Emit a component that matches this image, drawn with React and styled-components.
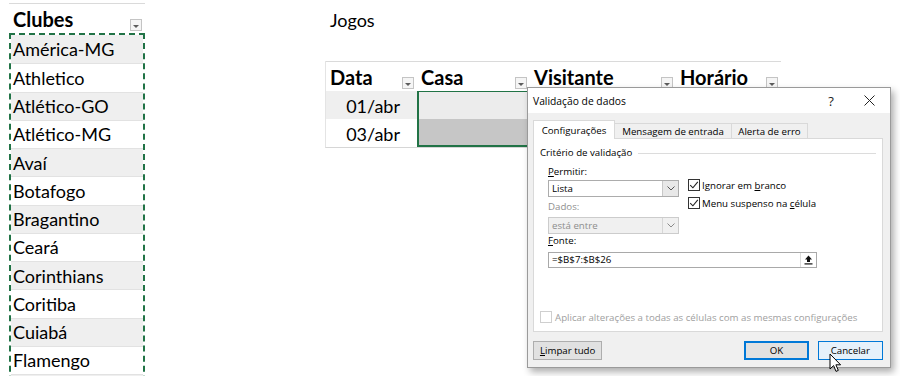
import React from "react";
import styled, { createGlobalStyle } from "styled-components";

const GlobalStyle = createGlobalStyle`
  html, body {
    margin: 0;
    padding: 0;
    background: #ffffff;
  }
  body {
    width: 900px;
    height: 376px;
    overflow: hidden;
    font-family: Lato, "Liberation Sans", sans-serif;
  }
`;

const EXCEL_GREEN = "#217346";

// Sheet
const Page = styled.div`
  position: relative;
  box-sizing: border-box;
  height: 376px;
  overflow: hidden;
  display: flex;
  align-items: flex-start;
  padding: 3px 0 0 9px;
  color: #000;
`;

const ClubList = styled.div`
  width: 136px;
  flex-shrink: 0;
`;

const HeaderCell = styled.div`
  box-sizing: border-box;
  width: ${(p) => p.$w}px;
  height: 30px;
  border-top: 1px solid #dadada;
  display: flex;
  align-items: center;
  justify-content: space-between;
  padding-left: 4px;
  font-size: 20px;
  font-weight: 700;
  background: #fff;
`;

const FilterButton = styled.span`
  box-sizing: border-box;
  align-self: flex-end;
  width: 12px;
  height: 12px;
  margin: 0 3px 2px 0;
  border: 1px solid #c4c4c4;
  background: #f5f5f5;
  display: flex;
  align-items: flex-end;
  justify-content: center;
  padding-bottom: 2px;

  &::after {
    content: "";
    border-left: 3px solid transparent;
    border-right: 3px solid transparent;
    border-top: 3px solid #5c5c5c;
  }
`;

const ClubRows = styled.div`
  border: 2px dashed ${EXCEL_GREEN};
  border-bottom: none;
`;

const ClubRow = styled.div`
  box-sizing: border-box;
  height: 28.25px;
  display: flex;
  align-items: center;
  padding-left: 2px;
  font-size: 18px;
  border-top: ${(p) => (p.$first ? "none" : "1px solid #e2e2e2")};
  background: ${(p) => (p.$shade ? "#efefef" : "#ffffff")};
`;

const GamesArea = styled.div`
  margin-left: 180px;
  display: flex;
  flex-direction: column;
`;

const GamesTitle = styled.div`
  height: 58px;
  line-height: 34px;
  padding-left: 5px;
  font-size: 18px;
`;

const Table = styled.div`
  width: 455px;
  border-left: 1px solid #e4e4e4;
  border-bottom: 1px solid #d6d6d6;
`;

const TableRow = styled.div`
  display: flex;
  height: ${(p) => (p.$head ? 30 : 28)}px;
`;

const DataCell = styled.div`
  box-sizing: border-box;
  width: ${(p) => p.$w}px;
  display: flex;
  align-items: center;
  justify-content: ${(p) => (p.$right ? "flex-end" : "flex-start")};
  padding-right: ${(p) => (p.$right ? 17 : 0)}px;
  padding-top: 2px;
  font-size: 18px;
  background: ${(p) => p.$bg};
  border-left: ${(p) => (p.$sel ? `2px solid ${EXCEL_GREEN}` : "none")};
  border-top: ${(p) => (p.$selTop ? `1px solid ${EXCEL_GREEN}` : "none")};
  border-bottom: ${(p) => (p.$selBottom ? `2px solid ${EXCEL_GREEN}` : "none")};
`;

// Dialog
const Dialog = styled.div`
  position: absolute;
  left: 527px;
  top: 87px;
  box-sizing: border-box;
  width: 364px;
  height: 281px;
  border: 1px solid #9a9a9a;
  background: #f0f0f0;
  box-shadow: 3px 4px 7px rgba(0, 0, 0, 0.32);
  display: flex;
  flex-direction: column;
  font-family: "Open Sans", "Noto Sans", sans-serif;
  font-size: 9.7px;
  color: #000;
`;

const TitleBar = styled.div`
  height: 25px;
  background: #fff;
  display: flex;
  align-items: center;
  padding-left: 5px;
  padding-right: 2px;
`;

const TitleText = styled.span`
  flex: 1;
  font-size: 10.3px;
`;

const TitleButton = styled.span`
  width: 38px;
  height: 25px;
  display: flex;
  align-items: center;
  justify-content: center;
  font-size: 13px;
  color: #222;
`;

const DialogBody = styled.div`
  flex: 1;
  display: flex;
  flex-direction: column;
  padding: 7px 7px 7px 5px;
`;

const Tabs = styled.div`
  display: flex;
  align-items: flex-end;
  height: 18px;
`;

const Tab = styled.div`
  box-sizing: border-box;
  width: ${(p) => p.$w}px;
  height: ${(p) => (p.$active ? 19 : 15)}px;
  margin-bottom: ${(p) => (p.$active ? -1 : 0)}px;
  position: relative;
  z-index: ${(p) => (p.$active ? 1 : 0)};
  display: flex;
  align-items: center;
  justify-content: center;
  background: ${(p) => (p.$active ? "#ffffff" : "#f0f0f0")};
  border: 1px solid #d9d9d9;
  border-left: ${(p) => (p.$active ? "1px solid #d9d9d9" : "none")};
  border-bottom: none;
`;

const Panel = styled.div`
  box-sizing: border-box;
  height: 194px;
  border: 1px solid #d9d9d9;
  background: #fff;
  padding: 7px 6px 6px 6px;
  display: flex;
  flex-direction: column;
`;

const Legend = styled.div`
  display: flex;
  align-items: center;
  line-height: 14px;

  &::after {
    content: "";
    flex: 1;
    height: 1px;
    margin-left: 6px;
    background: #dcdcdc;
  }
`;

const Criteria = styled.div`
  margin-left: 8px;
  display: flex;
  flex-direction: column;
`;

const CriteriaTop = styled.div`
  display: grid;
  grid-template-columns: 131px auto;
  column-gap: 9px;
`;

const Column = styled.div`
  display: flex;
  flex-direction: column;
  padding-top: ${(p) => p.$pt || 0}px;
`;

const Label = styled.div`
  line-height: 14px;
  margin-top: ${(p) => p.$mt || 0}px;
  color: ${(p) => (p.$disabled ? "#8f8f8f" : "#000")};
`;

const Key = styled.span`
  text-decoration: underline;
  text-underline-offset: 1px;
`;

const Select = styled.div`
  box-sizing: border-box;
  height: 17px;
  margin-top: ${(p) => p.$mt || 0}px;
  display: flex;
  border: 1px solid ${(p) => (p.$disabled ? "#cccccc" : "#acacac")};
  background: ${(p) => (p.$disabled ? "#f0f0f0" : "#ffffff")};
  color: ${(p) => (p.$disabled ? "#8d8d8d" : "#000")};
`;

const SelectValue = styled.span`
  flex: 1;
  padding-left: 3px;
  line-height: 15px;
`;

const SelectArrow = styled.span`
  width: 15px;
  display: flex;
  align-items: center;
  justify-content: center;
  border-left: 1px solid ${(p) => (p.$disabled ? "#d6d6d6" : "#c8c8c8")};
  background: ${(p) => (p.$disabled ? "#f0f0f0" : "#e8e8e8")};
`;

const CheckRow = styled.div`
  display: flex;
  align-items: center;
  gap: ${(p) => p.$gap || 2}px;
  height: ${(p) => p.$h || 18}px;
  color: ${(p) => (p.$disabled ? "#a0a0a0" : "#000")};
  margin-top: ${(p) => (p.$bottom ? "auto" : "0")};
`;

const Box = styled.span`
  box-sizing: border-box;
  width: 12px;
  height: 12px;
  border: 1px solid ${(p) => (p.$disabled ? "#cfcfcf" : "#333333")};
  background: #fff;
  display: flex;
  align-items: center;
  justify-content: center;
`;

const SourceInput = styled.div`
  box-sizing: border-box;
  width: 269px;
  height: 16px;
  margin-top: 4px;
  display: flex;
  border: 1px solid #a9a9a9;
  background: #fff;
`;

const SourceValue = styled.span`
  flex: 1;
  padding-left: 3px;
  line-height: 14px;
`;

const CollapseButton = styled.span`
  width: 15px;
  display: flex;
  align-items: center;
  justify-content: center;
  border-left: 1px solid #dcdcdc;
`;

const ButtonRow = styled.div`
  display: flex;
  align-items: center;
  margin-top: 9px;
  height: 19px;
`;

const Button = styled.div`
  box-sizing: border-box;
  width: ${(p) => p.$w}px;
  height: 19px;
  margin-left: ${(p) => p.$ml || 0}px;
  display: flex;
  align-items: center;
  justify-content: center;
  background: ${(p) => (p.$hover ? "#e5f1fb" : "#e1e1e1")};
  border: 1px solid ${(p) => (p.$hover || p.$default ? "#0078d7" : "#adadad")};
  box-shadow: ${(p) => (p.$default ? "inset 0 0 0 1px #0078d7" : "none")};
`;

const Cursor = styled.svg`
  position: absolute;
  left: 829px;
  top: 353px;
`;

const clubs = [
  "América-MG", "Athletico", "Atlético-GO", "Atlético-MG", "Avaí", "Botafogo",
  "Bragantino", "Ceará", "Corinthians", "Coritiba", "Cuiabá", "Flamengo", "",
];

const columns = [
  { name: "Data", w: 91 },
  { name: "Casa", w: 113 },
  { name: "Visitante", w: 146 },
  { name: "Horário", w: 105 },
];

const games = [
  { date: "01/abr", shade: "#efefef", casa: "#ececec" },
  { date: "03/abr", shade: "#ffffff", casa: "#c6c6c6" },
];

const Check = () => (
  <svg width="10" height="10" viewBox="0 0 10 10">
    <path d="M1.2 5.2 L3.9 7.8 L8.8 1.8" fill="none" stroke="#222" strokeWidth="1.1" />
  </svg>
);

const Chevron = ({ color }) => (
  <svg width="8" height="5" viewBox="0 0 8 5">
    <path d="M0.5 0.5 L4 4 L7.5 0.5" fill="none" stroke={color} strokeWidth="1" />
  </svg>
);

const App = () => (
  <Page>
    <GlobalStyle />
    <ClubList>
      <HeaderCell $w={136}>
        Clubes
        <FilterButton />
      </HeaderCell>
      <ClubRows>
        {clubs.map((club, i) => (
          <ClubRow key={i} $first={i === 0} $shade={i % 2 === 0}>
            {club}
          </ClubRow>
        ))}
      </ClubRows>
    </ClubList>

    <GamesArea>
      <GamesTitle>Jogos</GamesTitle>
      <Table>
        <TableRow $head>
          {columns.map((col) => (
            <HeaderCell key={col.name} $w={col.w}>
              {col.name}
              <FilterButton />
            </HeaderCell>
          ))}
        </TableRow>
        {games.map((g, i) => (
          <TableRow key={g.date}>
            <DataCell $w={91} $right $bg={g.shade}>
              {g.date}
            </DataCell>
            <DataCell
              $w={113}
              $bg={g.casa}
              $sel
              $selTop={i === 0}
              $selBottom={i === games.length - 1}
            />
            <DataCell $w={146} $bg={g.shade} />
            <DataCell $w={105} $bg={g.shade} />
          </TableRow>
        ))}
      </Table>
    </GamesArea>

    <Dialog>
      <TitleBar>
        <TitleText>Validação de dados</TitleText>
        <TitleButton>?</TitleButton>
        <TitleButton>
          <svg width="11" height="11" viewBox="0 0 11 11">
            <path d="M0.5 0.5 L10.5 10.5 M10.5 0.5 L0.5 10.5" stroke="#222" strokeWidth="1" />
          </svg>
        </TitleButton>
      </TitleBar>
      <DialogBody>
        <Tabs>
          <Tab $w={82} $active>Configurações</Tab>
          <Tab $w={117}>Mensagem de entrada</Tab>
          <Tab $w={76}>Alerta de erro</Tab>
        </Tabs>
        <Panel>
          <Legend>Critério de validação</Legend>
          <Criteria>
            <CriteriaTop>
              <Column>
                <Label $mt={5}>
                  <Key>P</Key>ermitir:
                </Label>
                <Select $mt={1}>
                  <SelectValue>Lista</SelectValue>
                  <SelectArrow>
                    <Chevron color="#555" />
                  </SelectArrow>
                </Select>
                <Label $mt={3} $disabled>Dados:</Label>
                <Select $mt={3} $disabled>
                  <SelectValue>está entre</SelectValue>
                  <SelectArrow $disabled>
                    <Chevron color="#8a8a8a" />
                  </SelectArrow>
                </Select>
              </Column>
              <Column $pt={16}>
                <CheckRow>
                  <Box><Check /></Box>
                  <span>Ignorar em <Key>b</Key>ranco</span>
                </CheckRow>
                <CheckRow>
                  <Box><Check /></Box>
                  <span>Menu suspenso na <Key>c</Key>élula</span>
                </CheckRow>
              </Column>
            </CriteriaTop>
            <Label>
              <Key>F</Key>onte:
            </Label>
            <SourceInput>
              <SourceValue>=$B$7:$B$26</SourceValue>
              <CollapseButton>
                <svg width="9" height="10" viewBox="0 0 9 10">
                  <path d="M4.5 0.5 L8 4.5 L6 4.5 L6 7 L3 7 L3 4.5 L1 4.5 Z" fill="#111" />
                  <rect x="0.5" y="8.3" width="8" height="1.2" fill="#111" />
                </svg>
              </CollapseButton>
            </SourceInput>
          </Criteria>
          <CheckRow $bottom $disabled $gap={3} $h={16}>
            <Box $disabled />
            <span>Aplicar alterações a todas as células com as mesmas configurações</span>
          </CheckRow>
        </Panel>
        <ButtonRow>
          <Button $w={70}>
            <span><Key>L</Key>impar tudo</span>
          </Button>
          <Button $w={65} $ml={142} $default>OK</Button>
          <Button $w={66} $ml={9} $hover>Cancelar</Button>
        </ButtonRow>
      </DialogBody>
    </Dialog>

    <Cursor width="13" height="20" viewBox="0 0 13 20">
      <path
        d="M1 1 L1 16 L4.6 12.6 L7 18.4 L9.3 17.4 L6.9 11.8 L11.6 11.8 Z"
        fill="#fff"
        stroke="#000"
        strokeWidth="1"
        strokeLinejoin="round"
      />
    </Cursor>
  </Page>
);

export default App;
